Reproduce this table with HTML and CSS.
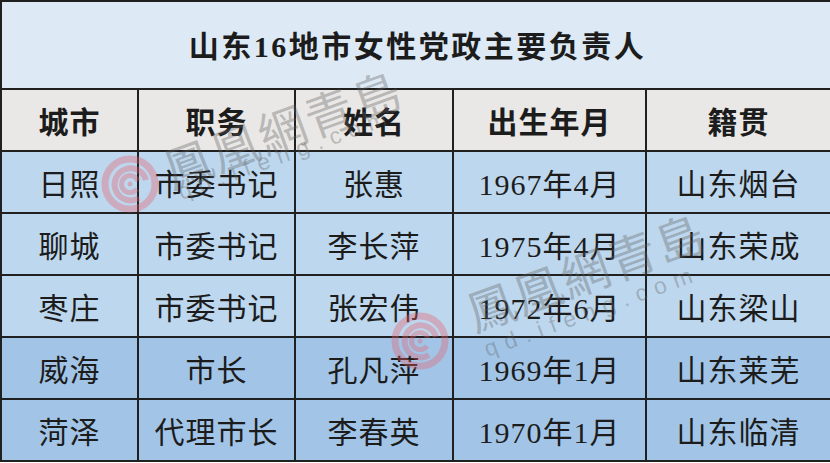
FILE: index.html
```html
<!DOCTYPE html>
<html lang="zh-CN">
<head>
<meta charset="utf-8">
<title>山东16地市女性党政主要负责人</title>
<link rel="stylesheet" href="styles.css">
</head>
<body>
<div class="page">
  <table class="grid">
    <colgroup>
      <col class="c1"><col class="c2"><col class="c3"><col class="c4"><col class="c5">
    </colgroup>
    <tr class="title-row"><th colspan="5">山东16地市女性党政主要负责人</th></tr>
    <tr class="head-row"><th>城市</th><th>职务</th><th>姓名</th><th>出生年月</th><th>籍贯</th></tr>
    <tr class="row light"><td>日照</td><td>市委书记</td><td>张惠</td><td>1967年4月</td><td>山东烟台</td></tr>
    <tr class="row light"><td>聊城</td><td>市委书记</td><td>李长萍</td><td>1975年4月</td><td>山东荣成</td></tr>
    <tr class="row light"><td>枣庄</td><td>市委书记</td><td>张宏伟</td><td>1972年6月</td><td>山东梁山</td></tr>
    <tr class="row dark"><td>威海</td><td>市长</td><td>孔凡萍</td><td>1969年1月</td><td>山东莱芜</td></tr>
    <tr class="row dark"><td>菏泽</td><td>代理市长</td><td>李春英</td><td>1970年1月</td><td>山东临清</td></tr>
  </table>

  <svg class="wm-logo logo-a" viewBox="-30 -30 60 60" aria-hidden="true">
    <circle r="25" fill="none" stroke="currentColor" stroke-width="7"/>
    <path d="M 16 -4 A 16 16 0 1 0 9 14" fill="none" stroke="currentColor" stroke-width="6"/>
    <path d="M 7 5 A 8.5 8.5 0 1 1 8 -3" fill="none" stroke="currentColor" stroke-width="5"/>
    <circle r="2.5" fill="currentColor"/>
  </svg>
  <div class="wm-title wt-a">鳳凰網青島</div>
  <div class="wm-url wu-a">qd.ifeng.com</div>

  <svg class="wm-logo logo-b" viewBox="-30 -30 60 60" aria-hidden="true">
    <circle r="25" fill="none" stroke="currentColor" stroke-width="7"/>
    <path d="M 16 -4 A 16 16 0 1 0 9 14" fill="none" stroke="currentColor" stroke-width="6"/>
    <path d="M 7 5 A 8.5 8.5 0 1 1 8 -3" fill="none" stroke="currentColor" stroke-width="5"/>
    <circle r="2.5" fill="currentColor"/>
  </svg>
  <div class="wm-title wt-b">鳳凰網青島</div>
  <div class="wm-url wu-b">qd.ifeng.com</div>
</div>
</body>
</html>
```
FILE: styles.css
```css
html, body {
  margin: 0;
  padding: 0;
  background: #ffffff;
}

.page {
  position: relative;
  width: 830px;
  height: 463px;
  overflow: hidden;
}

.grid {
  width: 830px;
  table-layout: fixed;
  border-collapse: collapse;
  font-family: "Liberation Serif", "Noto Sans CJK SC", serif;
  color: #1c1c1c;
}

.c1 { width: 137px; }
.c2 { width: 157px; }
.c3 { width: 158px; }
.c4 { width: 193px; }
.c5 { width: 185px; }

.grid th,
.grid td {
  border: 2px solid #202020;
  padding: 0;
  text-align: center;
  vertical-align: middle;
}

.title-row th {
  height: 83px;
  padding-left: 3px;
  padding-bottom: 3px;
  background: #ddeaf6;
  font-size: 30px;
  font-weight: 700;
  letter-spacing: 2.5px;
}

.head-row th {
  height: 60px;
  background: #e9e8e6;
  font-size: 30px;
  font-weight: 700;
  letter-spacing: 1px;
}

.row td {
  height: 60px;
  font-size: 30px;
  font-weight: 400;
  letter-spacing: 1px;
}

.row.light td { background: #bdd7ee; }
.row.dark td { background: #a2c5e7; }

/* watermarks overlaid on the table */
.wm-logo {
  position: absolute;
  width: 60px;
  height: 60px;
  color: #e8606e;
  opacity: 0.36;
}
.logo-a { left: 100px; top: 154px; }
.logo-b { left: 390px; top: 311px; }

.wm-title {
  position: absolute;
  transform: translate(-50%, -50%) rotate(-20deg);
  font-family: "Noto Sans CJK TC", "Noto Sans CJK SC", sans-serif;
  font-weight: 400;
  font-size: 48px;
  letter-spacing: 2px;
  line-height: 1;
  white-space: nowrap;
  color: rgba(95, 95, 95, 0.36);
}
.wt-a { left: 282px; top: 127px; }
.wt-b { left: 585px; top: 270px; }

.wm-url {
  position: absolute;
  transform: translate(-50%, -50%) rotate(-20deg);
  font-family: "Liberation Sans", sans-serif;
  font-size: 23px;
  letter-spacing: 8px;
  line-height: 1;
  white-space: nowrap;
  color: rgba(95, 95, 95, 0.34);
}
.wu-a { left: 286px; top: 154px; }
.wu-b { left: 592px; top: 311px; }
```
